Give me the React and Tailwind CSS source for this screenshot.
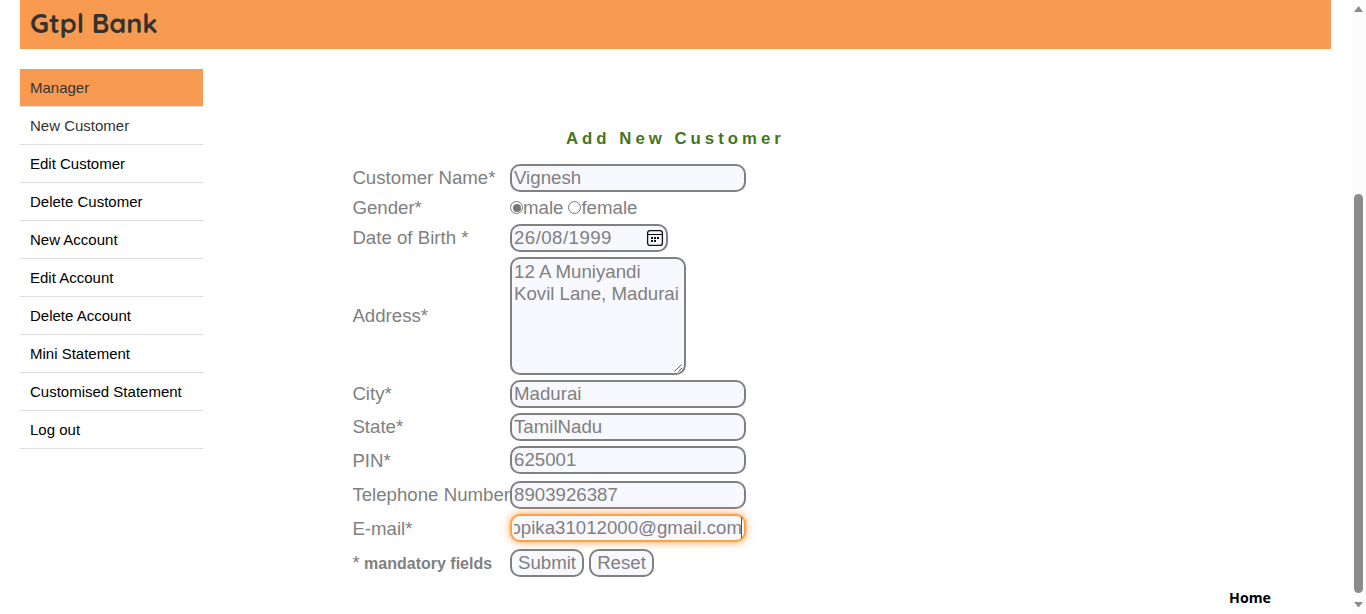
const menu = [
  'New Customer',
  'Edit Customer',
  'Delete Customer',
  'New Account',
  'Edit Account',
  'Delete Account',
  'Mini Statement',
  'Customised Statement',
  'Log out',
];

function Row({ label, className = '', labelClass = '', children }) {
  return (
    <div className={`flex items-center ${className}`}>
      <div className={`w-[158px] shrink-0 pl-[0.4px] whitespace-nowrap ${labelClass}`}>{label}</div>
      {children}
    </div>
  );
}

function Field({ value }) {
  return (
    <div className="h-7 w-[236px] rounded-[10px] border-2 border-[#808080] bg-[#f8f8ff] pl-0.5 leading-[23px]">
      {value}
    </div>
  );
}

function Radio({ checked }) {
  return (
    <span className="mb-px flex size-[13px] shrink-0 items-center justify-center rounded-full border border-[#767676] bg-white">
      {checked && <span className="size-[8px] rounded-full bg-[#767676]" />}
    </span>
  );
}

function CalendarIcon() {
  return (
    <svg className="size-[18px] shrink-0" viewBox="0 0 18 18" fill="none">
      <rect x="1.6" y="1.6" width="14.8" height="14.8" rx="2.5" stroke="#111" strokeWidth="1.3" />
      <path d="M2 5.5H16" stroke="#111" strokeWidth="1" />
      <path d="M8 8h2v2H8zM11 8h2v2h-2zM5 8h2v2H5zM5 11h2v2H5zM8 11h2v2H8z" fill="#111" />
    </svg>
  );
}

function Button({ children, className }) {
  return (
    <button
      className={`h-7 rounded-[10px] border-2 border-[#808080] bg-[#f8f8ff] text-center leading-[22px] ${className}`}
    >
      {children}
    </button>
  );
}

function Scrollbar() {
  return (
    <div className="flex h-full w-[15px] shrink-0 flex-col items-center bg-[#fcfcfc]">
      <svg className="mt-[6px] h-[6px] w-[9px] shrink-0" viewBox="0 0 9 6">
        <path d="M4.5 0L9 6H0z" fill="#8b8b8b" />
      </svg>
      <div className="mt-[182px] h-[399px] w-[9px] shrink-0 rounded-full bg-[#8b8b8b]" />
      <svg className="mt-[9px] h-[6px] w-[9px] shrink-0" viewBox="0 0 9 6">
        <path d="M0 0H9L4.5 5.5z" fill="#8b8b8b" />
      </svg>
    </div>
  );
}

export default function App() {
  return (
    <div className="flex h-[614px] w-[1366px] overflow-hidden bg-white font-['Liberation_Sans',Arial,sans-serif]">
      <div className="flex h-full w-[1351px] flex-col pr-5 pl-5">
        <header className="h-[49px] w-[1311px] shrink-0 bg-[#f89b50] pl-2.5">
          <h1 className="font-['Quicksand','Lato',sans-serif] text-[27px] leading-[47px] font-bold text-[#333]">
            Gtpl Bank
          </h1>
        </header>

        <div className="flex pt-5">
          <nav className="w-[183px] shrink-0 text-[15px] leading-[37px]">
            <div className="h-[38px] border-b border-[#ddd] bg-[#f89b50] pl-2.5 text-[#333]">Manager</div>
            {menu.map((item, i) => (
              <div
                key={item}
                className={`h-[38px] border-b border-[#ddd] pl-2.5 ${i === 0 ? 'text-[#333]' : 'text-black'}`}
              >
                {item}
              </div>
            ))}
          </nav>

          <main className="ml-[149px] flex w-[650px] flex-col pt-[59px] text-[18.67px] leading-[22px] text-[#808080]">
            <h2 className="ml-[214px] h-5 text-[16.8px] leading-[22px] font-bold tracking-[4px] whitespace-nowrap text-[#46761b]">
              Add New Customer
            </h2>
            <Row label="Customer Name*" className="mt-4 h-7">
              <Field value="Vignesh" />
            </Row>
            <Row label="Gender*" className="mt-[5px] h-[22px]">
              <Radio checked />
              <span className="mr-[5px]">male</span>
              <Radio />
              <span>female</span>
            </Row>
            <Row label="Date of Birth *" className="mt-[5px] h-7">
              <div className="flex h-7 w-[158px] items-center justify-between rounded-[10px] border-2 border-[#808080] bg-[#f8f8ff] pr-0.5 pl-0.5">
                <span className="leading-[22px] tracking-[0.45px]">26/08/1999</span>
                <CalendarIcon />
              </div>
            </Row>
            <Row label="Address*" className="mt-[5px] h-[118px]">
              <div className="flex h-[118px] w-[176px] flex-col justify-between rounded-[10px] border-2 border-[#808080] bg-[#f8f8ff] pt-0.5 pl-0.5">
                <div className="whitespace-nowrap">
                  12 A Muniyandi
                  <br />
                  Kovil Lane, Madurai
                </div>
                <svg className="mr-[1px] mb-[1px] size-[9px] self-end" viewBox="0 0 9 9">
                  <path d="M0.5 8.5L7.5 1.5M4.5 8.5L8 5" stroke="#555" strokeWidth="1" />
                </svg>
              </div>
            </Row>
            <Row label="City*" className="mt-[5px] h-7">
              <Field value="Madurai" />
            </Row>
            <Row label="State*" className="mt-[5px] h-7">
              <Field value="TamilNadu" />
            </Row>
            <Row label="PIN*" className="mt-[5px] h-7" labelClass="pt-px">
              <Field value="625001" />
            </Row>
            <Row label="Telephone Number" className="mt-[7px] h-7">
              <Field value="8903926387" />
            </Row>
            <Row label="E-mail*" className="mt-[5px] h-7" labelClass="pt-px">
              <div className="h-7 w-[236px] rounded-[10px] border-2 border-[#ff9f46] bg-[#f8f8ff] px-0.5 shadow-[0_0_8px_#ff9f46]">
                <div className="flex h-6 justify-end overflow-hidden leading-[23px]">
                  <span className="whitespace-nowrap">opika31012000@gmail.com</span>
                  <span className="mt-px -ml-px h-[21px] w-px shrink-0 bg-[#555]" />
                </div>
              </div>
            </Row>
            <Row
              label={
                <>
                  <span className="text-[18.67px] font-normal">*</span> mandatory fields
                </>
              }
              className="mt-[7px] h-7"
              labelClass="pt-px text-base leading-[22px] font-bold"
            >
              <Button className="w-[74px]">Submit</Button>
              <Button className="ml-[5px] w-[65px]">Reset</Button>
            </Row>
          </main>
        </div>

        <a className="mt-[11px] mr-[60px] self-end font-['Open_Sans',sans-serif] text-[14.2px] leading-5 font-bold text-black">
          Home
        </a>
      </div>
      <Scrollbar />
    </div>
  );
}
